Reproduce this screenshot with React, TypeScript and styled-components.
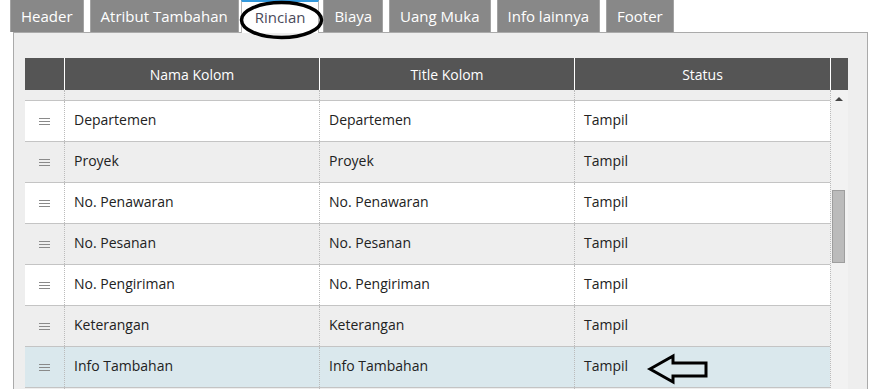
import React from "react";
import styled, { createGlobalStyle } from "styled-components";

const GlobalStyle = createGlobalStyle`
  html, body {
    margin: 0;
    padding: 0;
    overflow: hidden;
    background: #ffffff;
    font-family: "Open Sans", "Liberation Sans", sans-serif;
  }
  * { box-sizing: border-box; }
`;

const Page = styled.div`
  position: relative;
  width: 870px;
  height: 389px;
  overflow: hidden;
`;

const TabBar = styled.div`
  display: flex;
  gap: 6px;
  height: 32px;
  padding-left: 10px;
  position: relative;
  z-index: 1;
`;

const Tab = styled.div<{ $active?: boolean }>`
  display: flex;
  align-items: center;
  padding: 0 ${(p) => (p.$active ? "13px" : "10px")};
  margin: ${(p) => (p.$active ? "0 -2px -1px -4px" : "0")};
  background: ${(p) => (p.$active ? "#ffffff" : "#888888")};
  color: ${(p) => (p.$active ? "#4a4a5a" : "#ffffff")};
  border: 1px solid ${(p) => (p.$active ? "#b5b5b5" : "#a3a3a3")};
  border-top: ${(p) => (p.$active ? "2px solid #3399dd" : "none")};
  border-bottom: none;
  font-size: 15px;
  line-height: 20px;
  padding-bottom: ${(p) => (p.$active ? "1px" : "0")};
  white-space: nowrap;
`;

const Panel = styled.div`
  margin-left: 13px;
  width: 855px;
  height: 400px;
  background: #eeeeee;
  border: 1px solid #aaaaaa;
  padding: 25px 19px 0 11px;
`;

const Table = styled.div`
  width: 823px;
`;

const HeadRow = styled.div`
  display: grid;
  grid-template-columns: 39px 255px 255px 256px 18px;
  height: 32px;
  background: #555555;
`;

const HeadCell = styled.div<{ $divider?: boolean }>`
  display: flex;
  align-items: center;
  justify-content: center;
  color: #ffffff;
  font-size: 14px;
  border-left: ${(p) => (p.$divider ? "1px solid #ffffff" : "none")};
`;

const Body = styled.div`
  display: flex;
`;

const Rows = styled.div`
  width: 805px;
`;

const Row = styled.div<{ $bg: string; $partial?: boolean }>`
  display: grid;
  grid-template-columns: 39px 255px 255px 256px;
  height: ${(p) => (p.$partial ? "10px" : "41px")};
  background: ${(p) => p.$bg};
  border-top: ${(p) => (p.$partial ? "none" : "1px solid #c4c4c4")};
`;

const Cell = styled.div<{ $divider?: boolean }>`
  display: flex;
  align-items: center;
  padding-left: 9px;
  padding-bottom: 3px;
  font-size: 14px;
  color: #222222;
  border-left: ${(p) => (p.$divider ? "1px dotted #bbbbbb" : "none")};
  white-space: nowrap;
`;

const HandleCell = styled.div`
  display: flex;
  align-items: center;
  justify-content: center;
  padding-top: 1px;
`;

const ScrollTrack = styled.div`
  width: 18px;
  background: #f2f2f2;
  border-left: 1px dotted #bbbbbb;
  display: flex;
  flex-direction: column;
  align-items: center;
  padding-top: 7px;
`;

const UpArrow = styled.div`
  width: 0;
  height: 0;
  border-left: 4px solid transparent;
  border-right: 4px solid transparent;
  border-bottom: 4px solid #444444;
  margin-left: -1px;
`;

const Thumb = styled.div`
  width: 13px;
  height: 73px;
  margin-top: 89px;
  margin-left: -2px;
  background: #bbbbbb;
  border: 1px solid #9e9e9e;
`;

const Overlay = styled.svg`
  position: absolute;
  z-index: 5;
  pointer-events: none;
  overflow: visible;
`;

const DragHandle = () => (
  <svg width="11" height="8" viewBox="0 0 11 8">
    <g stroke="#8a8a8a" strokeWidth="1">
      <line x1="0" y1="0.5" x2="11" y2="0.5" />
      <line x1="0" y1="3.5" x2="11" y2="3.5" />
      <line x1="0" y1="6.5" x2="11" y2="6.5" />
    </g>
  </svg>
);

const tabs = ["Header", "Atribut Tambahan", "Rincian", "Biaya", "Uang Muka", "Info lainnya", "Footer"];

const rows = [
  { name: "Departemen", title: "Departemen", status: "Tampil" },
  { name: "Proyek", title: "Proyek", status: "Tampil" },
  { name: "No. Penawaran", title: "No. Penawaran", status: "Tampil" },
  { name: "No. Pesanan", title: "No. Pesanan", status: "Tampil" },
  { name: "No. Pengiriman", title: "No. Pengiriman", status: "Tampil" },
  { name: "Keterangan", title: "Keterangan", status: "Tampil" },
  { name: "Info Tambahan", title: "Info Tambahan", status: "Tampil" },
  { name: "", title: "", status: "" },
];

export default function App() {
  return (
    <>
      <GlobalStyle />
      <Page>
        <TabBar>
          {tabs.map((t) => (
            <Tab key={t} $active={t === "Rincian"}>
              {t}
            </Tab>
          ))}
        </TabBar>
        <Panel>
          <Table>
            <HeadRow>
              <HeadCell />
              <HeadCell $divider>Nama Kolom</HeadCell>
              <HeadCell $divider>Title Kolom</HeadCell>
              <HeadCell $divider>Status</HeadCell>
              <HeadCell $divider />
            </HeadRow>
            <Body>
              <Rows>
                <Row $bg="#eeeeee" $partial>
                  <HandleCell />
                  <Cell $divider />
                  <Cell $divider />
                  <Cell $divider />
                </Row>
                {rows.map((r, i) => {
                  const bg = i === 6 ? "#dae8ed" : i % 2 === 0 ? "#ffffff" : "#eeeeee";
                  return (
                    <Row key={i} $bg={bg}>
                      <HandleCell>{r.name && <DragHandle />}</HandleCell>
                      <Cell $divider>{r.name}</Cell>
                      <Cell $divider>{r.title}</Cell>
                      <Cell $divider>{r.status}</Cell>
                    </Row>
                  );
                })}
              </Rows>
              <ScrollTrack>
                <UpArrow />
                <Thumb />
              </ScrollTrack>
            </Body>
          </Table>
        </Panel>
        <Overlay style={{ left: 236, top: -3, width: 92, height: 46 }} viewBox="0 0 92 46">
          <ellipse cx="45.5" cy="23" rx="40" ry="17.5" fill="none" stroke="#000" strokeWidth="3.5" />
        </Overlay>
        <Overlay style={{ left: 645, top: 352, width: 66, height: 34 }} viewBox="0 0 66 34">
          <polygon
            points="5,17 28,4 28,11 61,11 61,24 28,24 28,30"
            fill="none"
            stroke="#000"
            strokeWidth="3"
            strokeLinejoin="miter"
          />
        </Overlay>
      </Page>
    </>
  );
}
